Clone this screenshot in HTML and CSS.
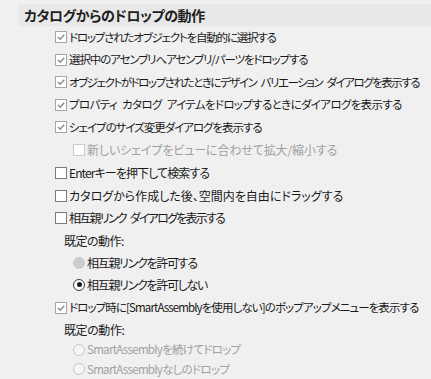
FILE: index.html
```html
<!DOCTYPE html>
<html lang="ja">
<head>
<meta charset="utf-8">
<link rel="stylesheet" href="styles.css">
</head>
<body>
<div class="panel">
  <div class="header"><span class="title">カタログからのドロップの動作</span></div>
  <div class="list">
    <div class="row"><span class="cb checked"><svg viewBox="0 0 10 10"><polyline points="2,5 4.2,7.2 8.2,2.8" /></svg></span><span class="label ui ls12">ドロップされたオブジェクトを自動的に選択する</span></div>
    <div class="row"><span class="cb checked"><svg viewBox="0 0 10 10"><polyline points="2,5 4.2,7.2 8.2,2.8" /></svg></span><span class="label ui ls11">選択中のアセンブリへアセンブリ/パーツをドロップする</span></div>
    <div class="row"><span class="cb checked"><svg viewBox="0 0 10 10"><polyline points="2,5 4.2,7.2 8.2,2.8" /></svg></span><span class="label ui ls14 sp">オブジェクトがドロップされたときにデザイン バリエーション ダイアログを表示する</span></div>
    <div class="row"><span class="cb checked"><svg viewBox="0 0 10 10"><polyline points="2,5 4.2,7.2 8.2,2.8" /></svg></span><span class="label ui ls6 sp">プロパティ カタログ アイテムをドロップするときにダイアログを表示する</span></div>
    <div class="row"><span class="cb checked"><svg viewBox="0 0 10 10"><polyline points="2,5 4.2,7.2 8.2,2.8" /></svg></span><span class="label ui ls10">シェイプのサイズ変更ダイアログを表示する</span></div>
    <div class="row sub disabled"><span class="cb"></span><span class="label ls1">新しいシェイプをビューに合わせて拡大/縮小する</span></div>
    <div class="row"><span class="cb"></span><span class="label ls9">Enterキーを押下して検索する</span></div>
    <div class="row"><span class="cb"></span><span class="label">カタログから作成した後、空間内を自由にドラッグする</span></div>
    <div class="row"><span class="cb"></span><span class="label ls17 sp">相互親リンク ダイアログを表示する</span></div>
    <div class="row caption"><span class="label ls5">既定の動作:</span></div>
    <div class="row radio-row"><span class="rb filled-disabled"></span><span class="label ls13">相互親リンクを許可する</span></div>
    <div class="row radio-row"><span class="rb selected"></span><span class="label ls13">相互親リンクを許可しない</span></div>
    <div class="row gap"><span class="cb checked"><svg viewBox="0 0 10 10"><polyline points="2,5 4.2,7.2 8.2,2.8" /></svg></span><span class="label ui ls9">ドロップ時に[SmartAssemblyを使用しない]のポップアップメニューを表示する</span></div>
    <div class="row caption tight"><span class="label ls4">既定の動作:</span></div>
    <div class="row radio-row tight disabled"><span class="rb"></span><span class="label ui ls7">SmartAssemblyを続けてドロップ</span></div>
    <div class="row radio-row tight disabled"><span class="rb"></span><span class="label ui ls7">SmartAssemblyなしのドロップ</span></div>
  </div>
</div>
</body>
</html>
```

FILE: styles.css
```css
html, body {
  margin: 0;
  padding: 0;
  background: #f0f0f0;
}
body {
  width: 431px;
  height: 379px;
  overflow: hidden;
  font-family: "Noto Sans CJK JP", "Noto Sans", sans-serif;
  color: #1a1a1a;
}
.panel {
  padding-top: 4px;
}
.header {
  margin-left: 19px;
  height: 22px;
  background: #e8e8e8;
  display: flex;
  align-items: center;
  padding-left: 5px;
}
.title {
  font-size: 14px;
  font-weight: 700;
  font-feature-settings: "palt";
  letter-spacing: -0.4px;
  color: #1e1e1e;
}
.list {
  display: flex;
  flex-direction: column;
  padding-left: 55px;
}
.row {
  height: 22.5px;
  flex: none;
  display: flex;
  align-items: center;
  white-space: nowrap;
}
.row.sub {
  height: 23.5px;
  padding-left: 18px;
}
.row.caption {
  height: 23px;
  padding-left: 9px;
}
.row.radio-row {
  height: 21.5px;
  padding-left: 18px;
}
.row.gap {
  height: 24px;
}
.row.caption.tight {
  height: 20.5px;
}
.row.radio-row.tight {
  height: 19.5px;
}
.label {
  margin-left: 2px;
  font-size: 12px;
  line-height: 1;
  font-feature-settings: "palt";
}
.label.ui {
  font-size: 11.5px;
}
.label.sp {
  word-spacing: 3px;
}
.caption .label {
  margin-left: 0;
}
.ls1 { letter-spacing: -0.1px; }
.ls4 { letter-spacing: -0.4px; }
.ls5 { letter-spacing: -0.5px; }
.ls6 { letter-spacing: -0.65px; }
.ls7 { letter-spacing: -0.7px; }
.ls9 { letter-spacing: -0.9px; }
.ls10 { letter-spacing: -1.05px; }
.ls11 { letter-spacing: -1.1px; }
.ls12 { letter-spacing: -1.2px; }
.ls13 { letter-spacing: -1.3px; }
.ls14 { letter-spacing: -1.45px; }
.ls17 { letter-spacing: -1.75px; }
.disabled .label {
  color: #a0a0a0;
}
.cb {
  width: 12px;
  height: 12px;
  box-sizing: border-box;
  border: 1px solid #7a7a7a;
  background: #ffffff;
  flex: none;
  display: flex;
}
.cb.checked {
  border-color: #a6a6a6;
}
.cb svg {
  width: 10px;
  height: 10px;
}
.cb polyline {
  fill: none;
  stroke: #8c8c8c;
  stroke-width: 1.5;
}
.disabled .cb {
  border-color: #cacaca;
}
.rb {
  width: 12px;
  height: 12px;
  box-sizing: border-box;
  border-radius: 50%;
  border: 1px solid #3a3a3a;
  background: #ffffff;
  flex: none;
  display: flex;
  align-items: center;
  justify-content: center;
}
.rb.selected::after {
  content: "";
  width: 5px;
  height: 5px;
  border-radius: 50%;
  background: #1a1a1a;
}
.rb.filled-disabled {
  border-color: #cccccc;
  background: #cccccc;
}
.disabled .rb {
  border-color: #c4c4c4;
  background: #f5f5f5;
}
```
